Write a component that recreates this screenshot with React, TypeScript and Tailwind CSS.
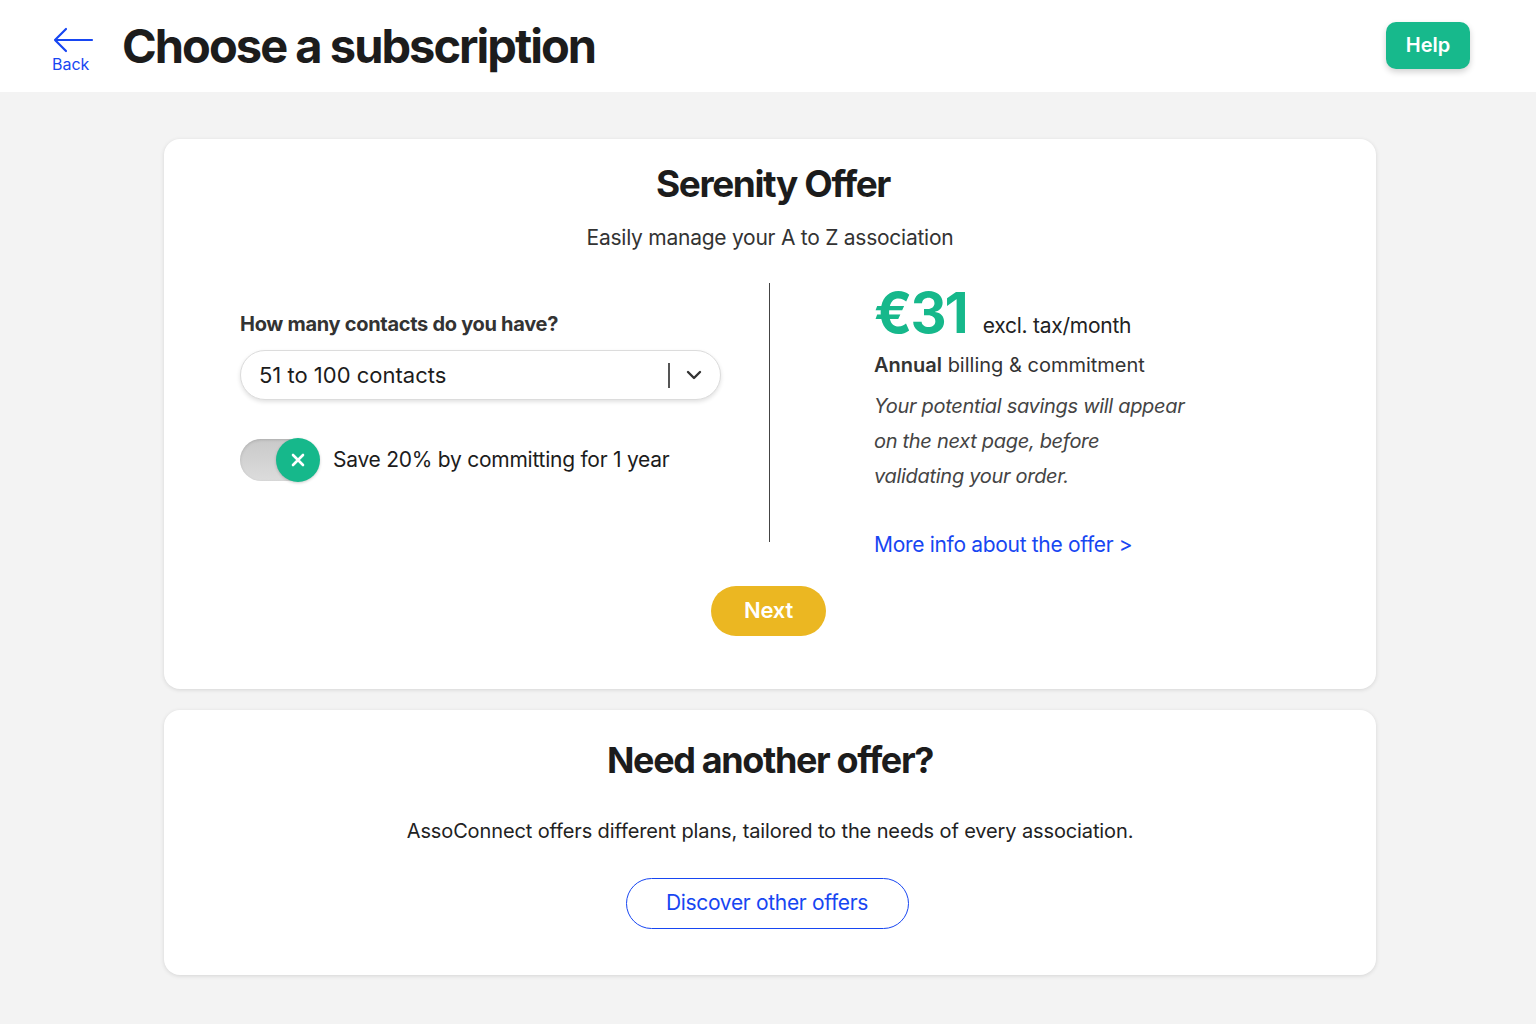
import React from "react";

const font = { fontFamily: 'Inter, "Noto Sans", "Liberation Sans", sans-serif' };

function BackArrow() {
  return (
    <svg width="42" height="26" viewBox="0 0 42 26" fill="none">
      <path
        d="M40 13H3M14 2L3 13l11 11"
        stroke="#1746f2"
        strokeWidth="2.2"
        strokeLinecap="round"
        strokeLinejoin="round"
      />
    </svg>
  );
}

function Toggle() {
  return (
    <div className="relative h-[42px] w-[80px] shrink-0">
      <div className="absolute left-0 top-0 h-[42px] w-[70px] rounded-full bg-gradient-to-b from-[#c9c9c9] to-[#dcdcdc] shadow-[inset_0_1px_3px_rgba(0,0,0,0.15)]" />
      <div className="absolute right-0 top-[-1px] flex h-[44px] w-[44px] items-center justify-center rounded-full bg-[#16b88b] shadow-[0_1px_3px_rgba(0,0,0,0.2)]">
        <svg width="16" height="16" viewBox="0 0 16 16">
          <path d="M3 3l10 10M13 3L3 13" stroke="#fff" strokeWidth="2.6" strokeLinecap="round" />
        </svg>
      </div>
    </div>
  );
}

export default function App() {
  return (
    <div className="min-h-screen bg-[#f3f3f3] text-[#1f1f1f]" style={font}>
      {/* Header */}
      <header className="flex h-[92px] items-center justify-between bg-white pl-[52px] pr-[66px]">
        <div className="flex items-center">
          <div className="flex w-[42px] flex-col items-start pt-[8px]">
            <BackArrow />
            <span className="mt-[1px] text-[16px] leading-[20px] text-[#1746f2]">Back</span>
          </div>
          <h1 className="ml-[28px] text-[47px] font-bold leading-[56px] tracking-[-0.042em] text-[#1c1c1c]">
            Choose a subscription
          </h1>
        </div>
        <button className="mb-[2px] h-[47px] w-[84px] rounded-[10px] bg-[#17b98c] text-[20px] font-semibold text-white shadow-[0_3px_6px_rgba(0,0,0,0.18)]">
          Help
        </button>
      </header>

      <main className="ml-[164px] flex w-[1212px] flex-col gap-[21px] pt-[47px] pb-[50px]">
        {/* Serenity offer */}
        <section className="flex flex-col items-center rounded-[16px] bg-white pt-[22px] pb-[53px] shadow-[0_1px_4px_rgba(0,0,0,0.12)]">
          <h2 className="pl-[6px] text-[37px] font-bold leading-[46px] tracking-[-0.038em] text-[#1c1c1c]">
            Serenity Offer
          </h2>
          <p className="mt-[16px] text-[21px] leading-[30px] tracking-[-0.012em] text-[#333]">
            Easily manage your A to Z association
          </p>

          <div className="mt-[30px] grid w-full grid-cols-2">
            {/* Left column */}
            <div className="flex items-start">
              <div className="flex flex-1 flex-col pl-[76px] pr-[48px] pt-[27px]">
                <label className="text-[20px] font-bold leading-[28px] tracking-[-0.015em] text-[#333]">
                  How many contacts do you have?
                </label>
                <div className="mt-[12px] flex h-[50px] items-center rounded-full border border-[#dcdcdc] bg-white pl-[18px] pr-[18px] shadow-[0_2px_4px_rgba(0,0,0,0.12)]">
                  <span className="flex-1 text-[22px] text-[#1c1c1c]">51 to 100 contacts</span>
                  <span className="h-[25px] w-[2px] bg-[#555]" />
                  <svg className="ml-[16px]" width="16" height="10" viewBox="0 0 16 10">
                    <path d="M2 2l6 6 6-6" stroke="#333" strokeWidth="2.4" fill="none" strokeLinecap="round" strokeLinejoin="round" />
                  </svg>
                </div>
                <div className="mt-[39px] flex items-center gap-[13px]">
                  <Toggle />
                  <span className="text-[21px] tracking-[-0.012em] text-[#1c1c1c]">Save 20% by committing for 1 year</span>
                </div>
              </div>
              <div className="h-[259px] w-px bg-[#444]" />
            </div>

            {/* Right column */}
            <div className="flex flex-col pl-[104px] pt-[2px]">
              <div className="flex items-baseline">
                <span className="text-[56px] font-bold leading-[56px] tracking-[-0.035em] text-[#16b88b]">€31</span>
                <span className="ml-[16px] text-[21px] tracking-[-0.012em] text-[#222]">excl. tax/month</span>
              </div>
              <p className="mt-[9px] text-[20px] leading-[28px] text-[#333]">
                <span className="font-semibold">Annual</span> billing &amp; commitment
              </p>
              <p className="mt-[10px] whitespace-nowrap text-[20px] italic leading-[35px] tracking-[-0.015em] text-[#444]">
                Your potential savings will appear
                <br />
                on the next page, before
                <br />
                validating your order.
              </p>
              <a href="#" className="mt-[36px] text-[21px] leading-[30px] tracking-[-0.015em] text-[#1746f2]">
                More info about the offer &gt;
              </a>
            </div>
          </div>

          <button className="mr-[3px] mt-[26px] h-[50px] w-[115px] rounded-full bg-[#ebb722] text-[22px] font-semibold tracking-[-0.01em] text-white">
            Next
          </button>
        </section>

        {/* Another offer */}
        <section className="flex flex-col items-center rounded-[16px] bg-white pt-[28px] pb-[46px] shadow-[0_1px_4px_rgba(0,0,0,0.12)]">
          <h2 className="text-[36px] font-bold leading-[44px] tracking-[-0.038em] text-[#1c1c1c]">
            Need another offer?
          </h2>
          <p className="mt-[35px] text-[20px] leading-[28px] tracking-[-0.006em] text-[#222]">
            AssoConnect offers different plans, tailored to the needs of every association.
          </p>
          <button className="mr-[6px] mt-[33px] h-[51px] w-[283px] rounded-full border-[1.5px] border-[#1746f2] bg-white text-[21px] tracking-[-0.015em] text-[#1746f2]">
            Discover other offers
          </button>
        </section>
      </main>
    </div>
  );
}
